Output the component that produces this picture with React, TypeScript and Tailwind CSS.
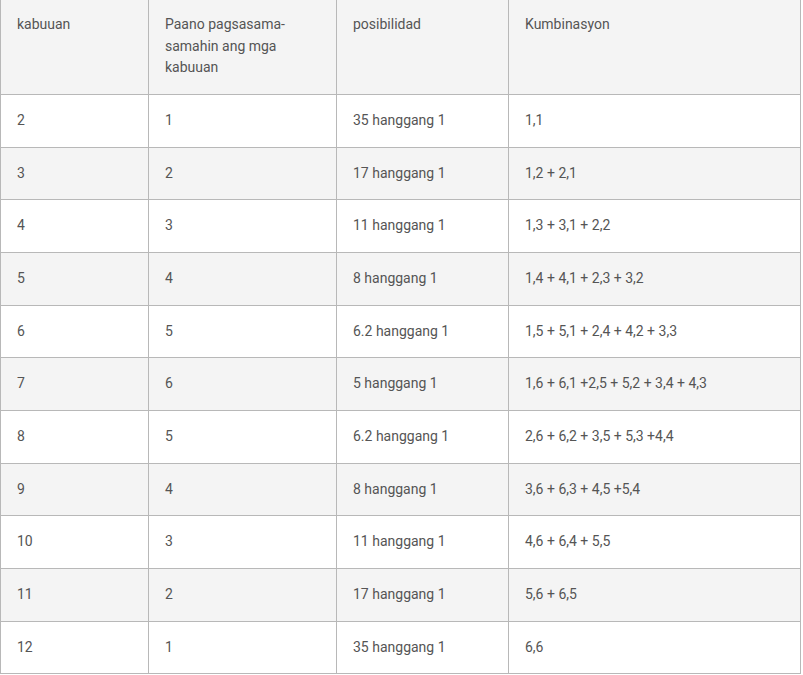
import React from "react";

const rows = [
  ["2", "1", "35 hanggang 1", "1,1"],
  ["3", "2", "17 hanggang 1", "1,2 + 2,1"],
  ["4", "3", "11 hanggang 1", "1,3 + 3,1 + 2,2"],
  ["5", "4", "8 hanggang 1", "1,4 + 4,1 + 2,3 + 3,2"],
  ["6", "5", "6.2 hanggang 1", "1,5 + 5,1 + 2,4 + 4,2 + 3,3"],
  ["7", "6", "5 hanggang 1", "1,6 + 6,1 +2,5 + 5,2 + 3,4 + 4,3"],
  ["8", "5", "6.2 hanggang 1", "2,6 + 6,2 + 3,5 + 5,3 +4,4"],
  ["9", "4", "8 hanggang 1", "3,6 + 6,3 + 4,5 +5,4"],
  ["10", "3", "11 hanggang 1", "4,6 + 6,4 + 5,5"],
  ["11", "2", "17 hanggang 1", "5,6 + 6,5"],
  ["12", "1", "35 hanggang 1", "6,6"],
];

export default function App() {
  return (
    <div
      className="w-[803px] h-[675px] bg-white overflow-hidden text-[14px] text-[#555555]"
      style={{ fontFamily: "Roboto, 'Liberation Sans', sans-serif" }}
    >
      <table className="table-fixed w-[801px] border-collapse -mt-px">
        <colgroup>
          <col className="w-[148px]" />
          <col className="w-[188px]" />
          <col className="w-[172px]" />
          <col />
        </colgroup>
        <thead>
          <tr className="bg-[#f4f4f4]">
            <th className="h-[95px] border border-[#b8b8b8] px-4 pt-[14px] pb-[14px] text-left align-top font-normal leading-[21.7px]">
              kabuuan
            </th>
            <th className="border border-[#b8b8b8] px-4 pt-[14px] pb-[14px] text-left align-top font-normal leading-[21.7px]">
              Paano pagsasama-
              <br />
              samahin ang mga
              <br />
              kabuuan
            </th>
            <th className="border border-[#b8b8b8] px-4 pt-[14px] pb-[14px] text-left align-top font-normal leading-[21.7px]">
              posibilidad
            </th>
            <th className="border border-[#b8b8b8] px-4 pt-[14px] pb-[14px] text-left align-top font-normal leading-[21.7px]">
              Kumbinasyon
            </th>
          </tr>
        </thead>
        <tbody>
          {rows.map((r, i) => (
            <tr key={r[0]} className={i % 2 === 1 ? "bg-[#f4f4f4]" : "bg-white"}>
              {r.map((c, j) => (
                <td
                  key={j}
                  className="h-[52.67px] border border-[#b8b8b8] px-4 py-0 align-middle leading-[21.7px]"
                >
                  {c}
                </td>
              ))}
            </tr>
          ))}
        </tbody>
      </table>
    </div>
  );
}
